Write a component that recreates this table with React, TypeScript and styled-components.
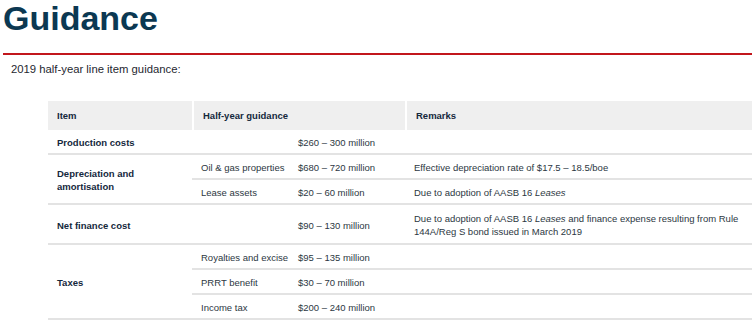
import React from "react";
import styled, { createGlobalStyle } from "styled-components";

const GlobalStyle = createGlobalStyle`
  body {
    margin: 0;
    background: #ffffff;
    font-family: "Liberation Sans", Arial, sans-serif;
  }
`;

const Page = styled.div`
  padding-left: 3px;
  width: 749px;
`;

const Title = styled.h1`
  margin: 0 0 17px 0;
  font-size: 34px;
  line-height: 36px;
  font-weight: 700;
  color: #0b3852;
`;

const Rule = styled.div`
  height: 2px;
  background: #c2161c;
`;

const Intro = styled.p`
  margin: 8px 0 25px 8px;
  font-size: 11.3px;
  line-height: 13px;
  color: #1e2730;
`;

const Table = styled.table`
  margin-left: 45px;
  width: 704px;
  border-collapse: separate;
  border-spacing: 0;
  table-layout: fixed;
  font-size: 9.5px;
  line-height: 13px;
`;

const HeadCell = styled.th<{ $divider?: boolean }>`
  background: #efefef;
  text-align: left;
  font-weight: 700;
  color: #14283c;
  padding: 8px 9px;
  border-left: ${(p) => (p.$divider ? "2px solid #ffffff" : "none")};
`;

const Cell = styled.td<{ $tall?: boolean }>`
  padding: ${(p) => (p.$tall ? "7px 9px 5px" : "6px 9px 4px")};
  border-bottom: 2px solid #e3e3e3;
  color: #2c3742;
  vertical-align: middle;
  white-space: nowrap;
`;

const ItemCell = styled(Cell)`
  font-weight: 700;
  color: #14283c;
  white-space: normal;
`;

const RemarkCell = styled(Cell)`
  padding-right: 2px;
`;

type Line = { sub?: string; value: string; remark?: React.ReactNode; tall?: boolean };
type Group = { item: React.ReactNode; lines: Line[] };

const groups: Group[] = [
  { item: "Production costs", lines: [{ value: "$260 – 300 million" }] },
  {
    item: "Depreciation and amortisation",
    lines: [
      { sub: "Oil & gas properties", value: "$680 – 720 million", remark: "Effective depreciation rate of $17.5 – 18.5/boe" },
      {
        sub: "Lease assets",
        value: "$20 – 60 million",
        remark: (
          <>
            Due to adoption of AASB 16 <em>Leases</em>
          </>
        ),
      },
    ],
  },
  {
    item: "Net finance cost",
    lines: [
      {
        value: "$90 – 130 million",
        tall: true,
        remark: (
          <>
            Due to adoption of AASB 16 <em>Leases</em> and finance expense resulting from Rule
            <br />
            144A/Reg S bond issued in March 2019
          </>
        ),
      },
    ],
  },
  {
    item: "Taxes",
    lines: [
      { sub: "Royalties and excise", value: "$95 – 135 million" },
      { sub: "PRRT benefit", value: "$30 – 70 million" },
      { sub: "Income tax", value: "$200 – 240 million" },
    ],
  },
];

export default function App() {
  return (
    <Page>
      <GlobalStyle />
      <Title>Guidance</Title>
      <Rule />
      <Intro>2019 half-year line item guidance:</Intro>
      <Table>
        <colgroup>
          <col style={{ width: 144 }} />
          <col style={{ width: 97 }} />
          <col style={{ width: 116 }} />
          <col style={{ width: 347 }} />
        </colgroup>
        <thead>
          <tr>
            <HeadCell>Item</HeadCell>
            <HeadCell $divider colSpan={2}>
              Half-year guidance
            </HeadCell>
            <HeadCell $divider>Remarks</HeadCell>
          </tr>
        </thead>
        <tbody>
          {groups.map((g, gi) =>
            g.lines.map((l, li) => (
              <tr key={`${gi}-${li}`}>
                {li === 0 && <ItemCell rowSpan={g.lines.length}>{g.item}</ItemCell>}
                <Cell $tall={l.tall}>{l.sub}</Cell>
                <Cell $tall={l.tall}>{l.value}</Cell>
                <RemarkCell $tall={l.tall}>{l.remark}</RemarkCell>
              </tr>
            ))
          )}
        </tbody>
      </Table>
    </Page>
  );
}
